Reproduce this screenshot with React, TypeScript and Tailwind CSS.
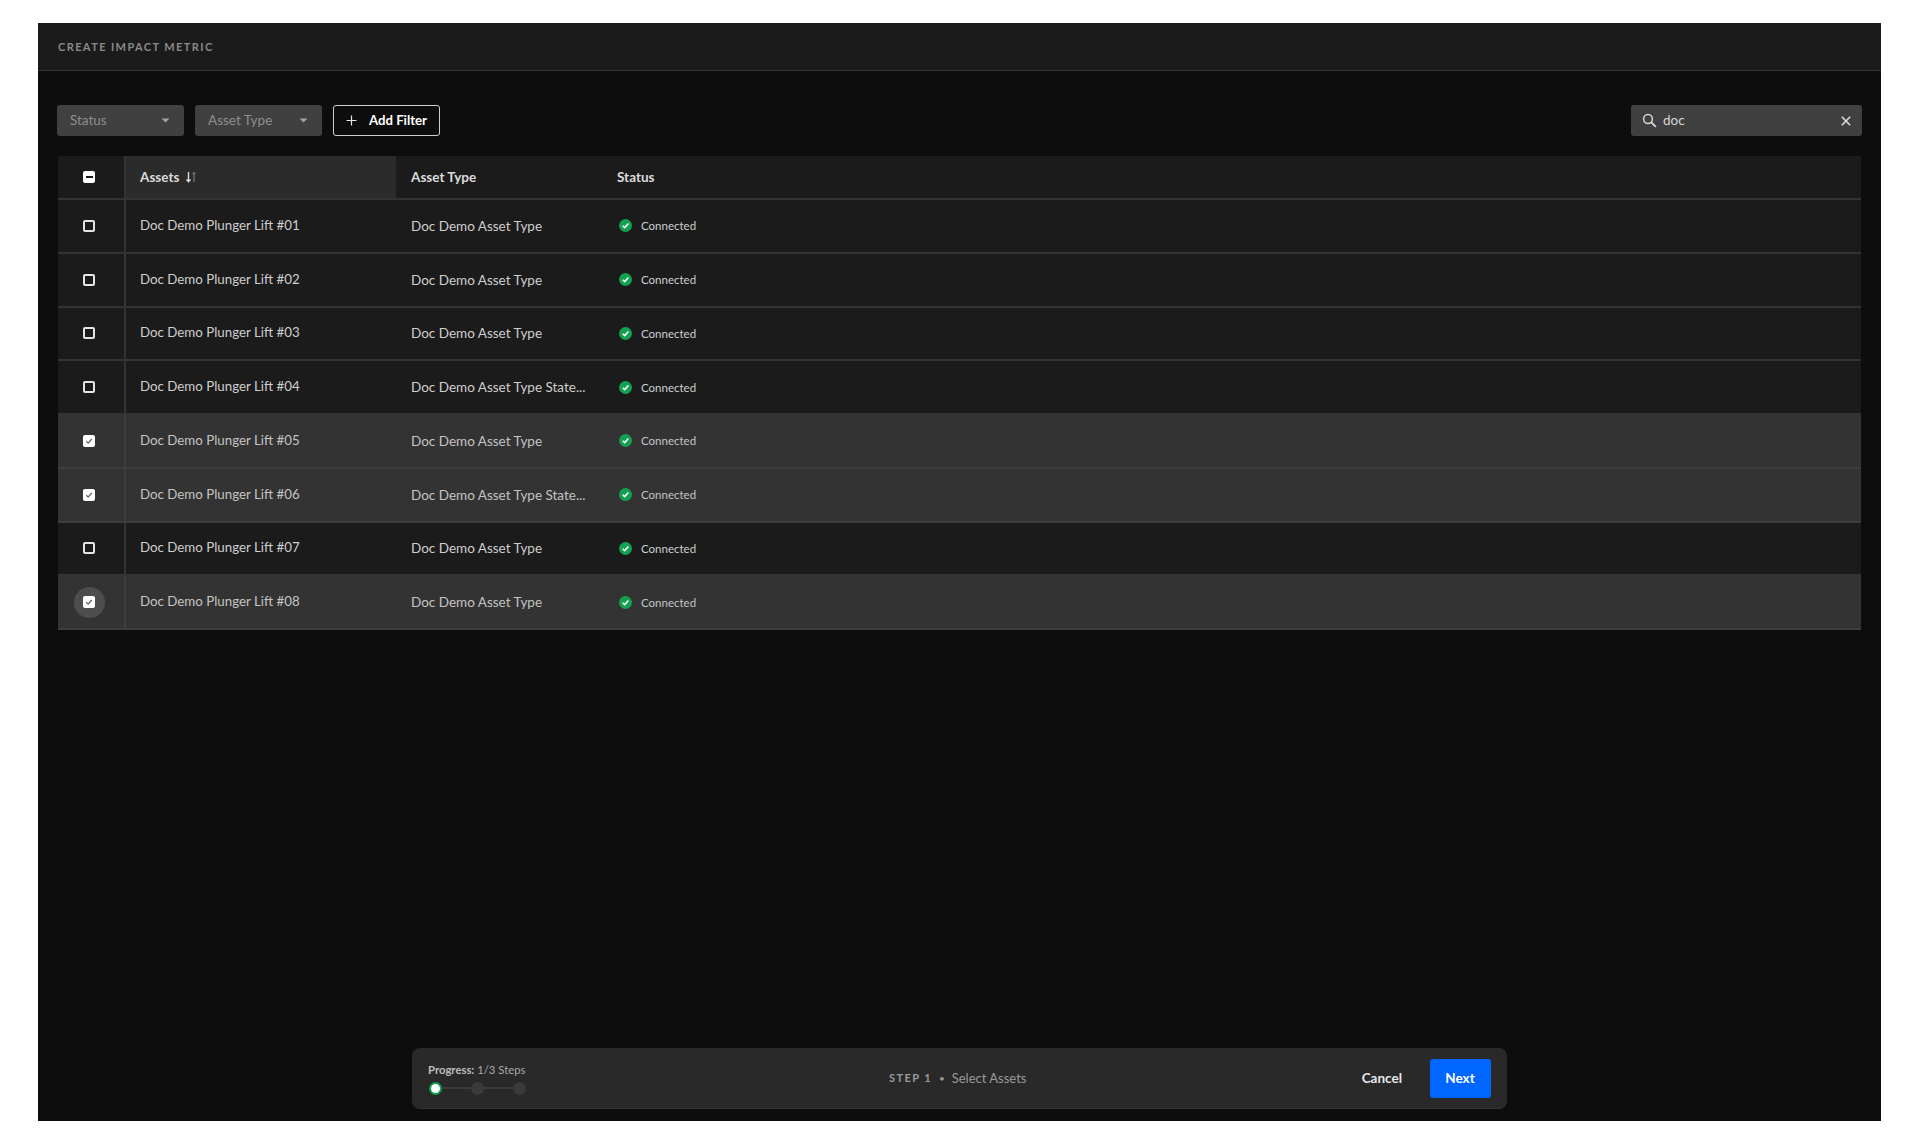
const rows = [
  { n: "01", t: "Doc Demo Asset Type", s: false },
  { n: "02", t: "Doc Demo Asset Type", s: false },
  { n: "03", t: "Doc Demo Asset Type", s: false },
  { n: "04", t: "Doc Demo Asset Type State...", s: false },
  { n: "05", t: "Doc Demo Asset Type", s: true },
  { n: "06", t: "Doc Demo Asset Type State...", s: true },
  { n: "07", t: "Doc Demo Asset Type", s: false },
  { n: "08", t: "Doc Demo Asset Type", s: true, hover: true },
];

function Caret() {
  return (
    <svg width="9" height="5" viewBox="0 0 9 5" className="shrink-0">
      <path d="M0.5 0.5h8L4.5 4.5z" fill="#a3a3a3" />
    </svg>
  );
}

function Box({ state }: { state: "empty" | "checked" | "mixed" }) {
  if (state === "empty") {
    return <div className="w-3 h-3 rounded-[2px] border-2 border-[#e4e4e4]" />;
  }
  return (
    <div className="w-3 h-3 rounded-[2px] bg-white flex items-center justify-center">
      {state === "checked" ? (
        <svg width="8" height="8" viewBox="0 0 8 8">
          <path d="M1.2 4.2 3.2 6 6.8 2" fill="none" stroke="#6b6b6b" strokeWidth="1.3" />
        </svg>
      ) : (
        <div className="w-[7px] h-[2px] bg-[#1a1a1a]" />
      )}
    </div>
  );
}

function Filter({ label }: { label: string }) {
  return (
    <div className="w-[127px] h-[31px] rounded-[3px] bg-[#404040] pl-[13px] pr-[14px] flex items-center justify-between text-[13.5px] text-[#8e8e8e]">
      <span>{label}</span>
      <Caret />
    </div>
  );
}

export default function App() {
  return (
    <div
      className="w-[1920px] h-[1144px] bg-white pt-[23px] pl-[38px] overflow-hidden"
      style={{ fontFamily: '"Lato", "Liberation Sans", sans-serif' }}
    >
      <div className="w-[1843px] h-[1098px] bg-[#0d0d0d] flex flex-col">
        <div className="h-[48px] shrink-0 bg-[#1b1b1b] border-b border-[#333333] pl-[20px] pt-[2px] flex items-center text-[11px] tracking-[1.4px] font-bold text-[#8a8a8a]">
          CREATE IMPACT METRIC
        </div>

        <div className="flex items-center justify-between pl-[19px] pr-[19px] mt-[34px] shrink-0">
          <div className="flex items-center gap-[11px]">
            <Filter label="Status" />
            <Filter label="Asset Type" />
            <button className="w-[107px] h-[31px] rounded-[3px] border border-[#d0d0d0] bg-[#0d0d0d] flex items-center justify-center gap-[12px] text-[13.2px] font-bold text-white">
              <svg width="11" height="11" viewBox="0 0 11 11">
                <path d="M5.5 0.5v10M0.5 5.5h10" stroke="#e6e6e6" strokeWidth="1.2" />
              </svg>
              Add Filter
            </button>
          </div>
          <div className="w-[231px] h-[31px] rounded-[3px] bg-[#404040] pl-[11px] pr-[11px] flex items-center text-[13.5px] text-[#d6d6d6]">
            <svg width="15" height="15" viewBox="0 0 15 15" className="shrink-0">
              <circle cx="6" cy="6" r="4.4" fill="none" stroke="#d8d8d8" strokeWidth="1.5" />
              <path d="M9.3 9.3 13.8 13.8" stroke="#d8d8d8" strokeWidth="1.8" />
            </svg>
            <span className="ml-[6px] flex-1">doc</span>
            <svg width="10" height="10" viewBox="0 0 10 10" className="shrink-0">
              <path d="M0.8 0.8 9.2 9.2M9.2 0.8 0.8 9.2" stroke="#e0e0e0" strokeWidth="1.5" />
            </svg>
          </div>
        </div>

        <div className="ml-[20px] w-[1803px] mt-[20px] shrink-0">
          <div className="h-[44px] flex bg-[#1b1b1b] border-b-2 border-[#333333] text-[13.5px] font-bold text-[#dcdcdc]">
            <div className="w-[68px] shrink-0 flex items-center justify-center border-r-2 border-[#333333] pr-[4px]">
              <Box state="mixed" />
            </div>
            <div className="w-[270px] shrink-0 bg-[#2b2b2b] pl-[14px] flex items-center gap-[6px]">
              Assets
              <svg width="12" height="12" viewBox="0 0 12 12">
                <path d="M3.5 1v9.500M1.500 8.500l2 2.200 2-2.200" fill="none" stroke="#dcdcdc" strokeWidth="1.4" />
                <path d="M9 11V1.500M7.500 3.200 9 1.500l1.500 1.700" fill="none" stroke="#8a8a8a" strokeWidth="1" />
              </svg>
            </div>
            <div className="w-[207px] shrink-0 pl-[15px] flex items-center">Asset Type</div>
            <div className="pl-[14px] flex items-center">Status</div>
          </div>
          {rows.map((r) => (
            <div
              key={r.n}
              className={`h-[53.75px] flex border-b-2 text-[13.5px] ${
                r.s ? "bg-[#333333] border-[#3d3d3d] text-[#c4c4c4]" : "bg-[#1b1b1b] border-[#333333] text-[#cfcfcf]"
              }`}
            >
              <div
                className={`w-[68px] shrink-0 flex items-center justify-center border-r-2 pr-[4px] ${
                  r.s ? "border-[#3d3d3d]" : "border-[#333333]"
                }`}
              >
                <div
                  className={`w-[31px] h-[31px] rounded-full flex items-center justify-center ${
                    r.hover ? "bg-[#4d4d4d]" : ""
                  }`}
                >
                  <Box state={r.s ? "checked" : "empty"} />
                </div>
              </div>
              <div className="w-[270px] shrink-0 pl-[14px] flex items-center text-[13.3px]">Doc Demo Plunger Lift #{r.n}</div>
              <div className="w-[207px] shrink-0 pl-[15px] flex items-center">{r.t}</div>
              <div className="pl-[16px] flex items-center gap-[9px] text-[11.5px]">
                <svg width="13" height="13" viewBox="0 0 13 13" className="shrink-0">
                  <circle cx="6.5" cy="6.5" r="6.5" fill="#12a150" />
                  <path d="M3.7 6.7 5.7 8.600 9.400 4.600" fill="none" stroke="#ffffff" strokeWidth="1.5" />
                </svg>
                Connected
              </div>
            </div>
          ))}
        </div>

        <div className="mt-auto mb-[12px] mx-auto w-[1095px] h-[61px] shrink-0 rounded-[8px] bg-[#292929] border-b border-[#333333] flex items-center pl-[16px] pr-[16px]">
          <div className="w-[461px] shrink-0 flex flex-col">
            <div className="text-[11.3px] text-[#a8a8a8] leading-[14px] mt-[1px]">
              <span className="font-bold text-[#bdbdbd]">Progress:</span> 1/3 Steps
            </div>
            <div className="flex items-center mt-[5px] ml-px w-[97px]">
              <div className="w-[13px] h-[13px] rounded-full bg-white border-2 border-[#0d9e4f] shrink-0" />
              <div className="flex-1 h-[2px] bg-[#3a3a3a]" />
              <div className="w-[13px] h-[13px] rounded-full bg-[#3a3a3a] shrink-0" />
              <div className="flex-1 h-[2px] bg-[#3a3a3a]" />
              <div className="w-[13px] h-[13px] rounded-full bg-[#3a3a3a] shrink-0" />
            </div>
          </div>
          <div className="flex items-center text-[13px] text-[#9a9a9a] mt-[1px]">
            <span className="text-[11px] font-bold tracking-[1.4px] text-[#9a9a9a]">STEP 1</span>
            <span className="mx-[7px] text-[10px]">•</span>
            <span>Select Assets</span>
          </div>
          <div className="ml-auto flex items-center">
            <button className="text-[13.5px] font-bold text-[#e8e8e8] mr-[28px]">Cancel</button>
            <button className="w-[61px] h-[39px] rounded-[3px] bg-[#0066ff] text-[13.5px] font-bold text-white pr-px">Next</button>
          </div>
        </div>
      </div>
    </div>
  );
}
